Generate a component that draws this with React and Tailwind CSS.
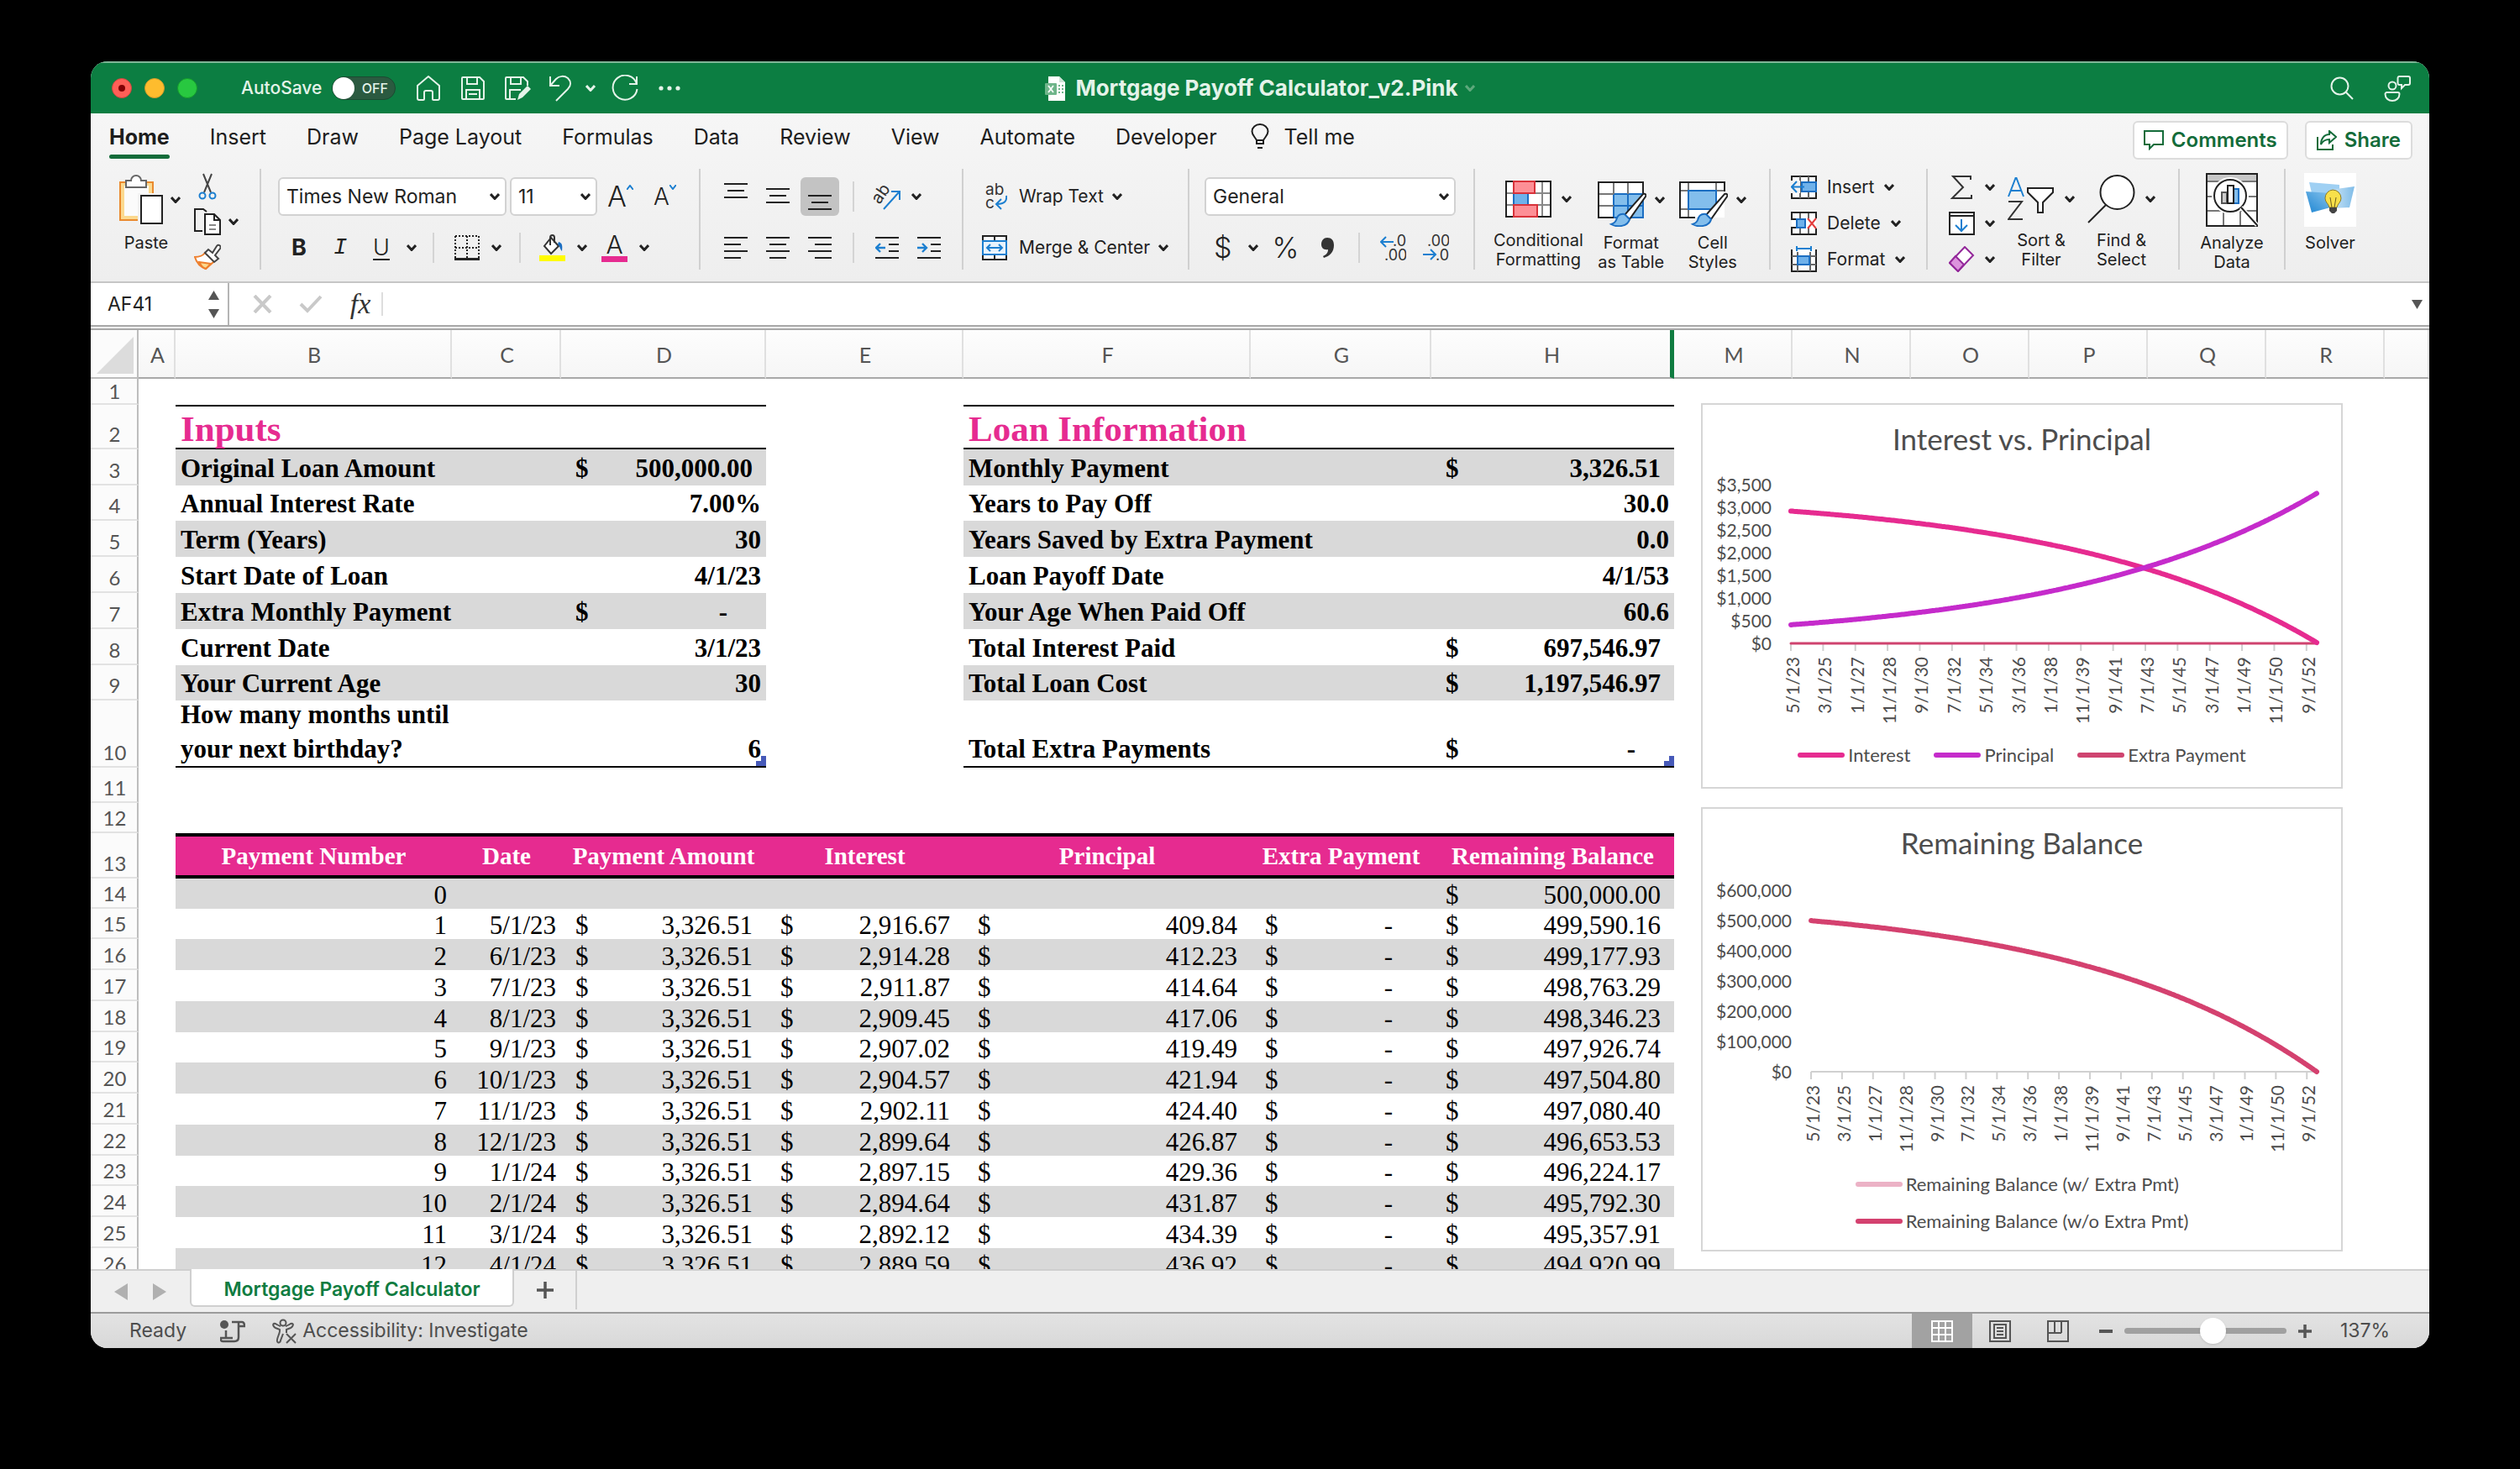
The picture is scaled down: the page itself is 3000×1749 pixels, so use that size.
import { useState } from "react";

const round2 = (n) => Math.round(n * 100) / 100;

const money = (n) =>
  n.toLocaleString("en-US", {
    minimumFractionDigits: 2,
    maximumFractionDigits: 2,
  });

// month 0 is the first payment, 5/1/23
const dateLabel = (month) => {
  const m = 4 + month;
  return `${(m % 12) + 1}/1/${23 + Math.floor(m / 12)}`;
};

const buildSchedule = () => {
  const rows = [];
  let balance = 500000;
  for (let i = 0; i < 360; i++) {
    const interest = round2((balance * 0.07) / 12);
    const principal = Math.min(round2(3326.51 - interest), balance);
    balance = round2(balance - principal);
    rows.push({ number: i + 1, date: dateLabel(i), interest, principal, balance });
  }
  return rows;
};

const schedule = buildSchedule();

const columns = [
  { name: "A", width: "w-11" },
  { name: "B", width: "w-[329px]" },
  { name: "C", width: "w-[130px]" },
  { name: "D", width: "w-[244px]" },
  { name: "E", width: "w-[235px]" },
  { name: "F", width: "w-[342px]" },
  { name: "G", width: "w-[215px]" },
  { name: "H", width: "w-[289px]" },
  { name: "M", width: "w-[141px]" },
  { name: "N", width: "w-[141px]" },
  { name: "O", width: "w-[141px]" },
  { name: "P", width: "w-[141px]" },
  { name: "Q", width: "w-[141px]" },
  { name: "R", width: "w-[141px]" },
  { name: "", width: "" },
];

const summary = [
  { row: 3, h: "h-[43px]", input: "Original Loan Amount", value: "500,000.00", inputMoney: true, info: "Monthly Payment", result: "3,326.51", infoMoney: true },
  { row: 4, h: "h-[42px]", input: "Annual Interest Rate", value: "7.00%", info: "Years to Pay Off", result: "30.0" },
  { row: 5, h: "h-[43px]", input: "Term (Years)", value: "30", info: "Years Saved by Extra Payment", result: "0.0" },
  { row: 6, h: "h-[43px]", input: "Start Date of Loan", value: "4/1/23", info: "Loan Payoff Date", result: "4/1/53" },
  { row: 7, h: "h-[43px]", input: "Extra Monthly Payment", value: "-", inputMoney: true, info: "Your Age When Paid Off", result: "60.6" },
  { row: 8, h: "h-[43px]", input: "Current Date", value: "3/1/23", info: "Total Interest Paid", result: "697,546.97", infoMoney: true },
  { row: 9, h: "h-[42px]", input: "Your Current Age", value: "30", info: "Total Loan Cost", result: "1,197,546.97", infoMoney: true },
];

const Chevron = ({ className = "" }) => (
  <svg className={`h-2 w-3 shrink-0 ${className}`} viewBox="0 0 12 8" fill="none" stroke="currentColor" strokeWidth="3">
    <path d="M1 1l5 5.500L11 1" />
  </svg>
);

/* ---------- title bar ---------- */

const TitleBar = () => {
  const [autoSave, setAutoSave] = useState(false);

  return (
    <header className="grid h-[62px] shrink-0 grid-cols-[1fr_auto_1fr] items-center border-t-2 border-[#7fb697] bg-[#0c7e42] text-[#e4f3e9]">
      <div className="flex items-center pl-[25px]">
        <div className="flex gap-[15px]">
          <button aria-label="Close" className="flex size-6 items-center justify-center rounded-full border border-[#c9483f] bg-[#fe5f57]">
            <span className="size-2 rounded-full bg-[#820005]" />
          </button>
          <button aria-label="Minimize" className="size-6 rounded-full border border-[#cf9a2a] bg-[#febc2e]" />
          <button aria-label="Zoom" className="size-6 rounded-full border border-[#179a2d] bg-[#28c840]" />
        </div>
        <label className="ml-[52px] flex items-center gap-3 text-[21px] leading-7 font-medium">
          AutoSave
          <input type="checkbox" className="sr-only" checked={autoSave} onChange={() => setAutoSave(!autoSave)} />
          <span className="flex h-7 w-[76px] items-center rounded-full border border-[#1b4a31] bg-[#2b5a40] text-base">
            <span className="size-[26px] rounded-full bg-white" />
            <span className="flex-1 text-center">OFF</span>
          </span>
        </label>
        <div className="ml-6 flex items-center">
          <button aria-label="Home">
            <svg className="h-8 w-[30px]" viewBox="0 0 30 32" fill="none" stroke="currentColor" strokeWidth="2">
              <path d="M2 13L15 2l13 11v15a2 2 0 0 1-2 2h-5a1 1 0 0 1-1-1v-8a2 2 0 0 0-2-2h-6a2 2 0 0 0-2 2v8a1 1 0 0 1-1 1H4a2 2 0 0 1-2-2z" strokeLinejoin="round" />
            </svg>
          </button>
          <button aria-label="Save" className="ml-[23px]">
            <svg className="size-[30px]" viewBox="0 0 30 30" fill="none" stroke="currentColor" strokeWidth="2">
              <path d="M3 2h20l5 5v20a1 1 0 0 1-1 1H3a1 1 0 0 1-1-1V3a1 1 0 0 1 1-1z" />
              <path d="M8 2v8h12V2M7 28V17h16v11M10 22h10" />
            </svg>
          </button>
          <button aria-label="Save a copy" className="ml-[22px]">
            <svg className="h-[30px] w-8" viewBox="0 0 32 30" fill="none" stroke="currentColor" strokeWidth="2">
              <path d="M14 28H3a1 1 0 0 1-1-1V3a1 1 0 0 1 1-1h20l5 5v5" />
              <path d="M8 2v8h12V2M7 28V17h13" />
              <path d="M16 29l2-7 10-10 4 4-10 10z" fill="currentColor" stroke="none" />
            </svg>
          </button>
          <button aria-label="Undo" className="ml-[21px]">
            <svg className="h-8 w-7" viewBox="0 0 28 32" fill="none" stroke="currentColor" strokeWidth="2">
              <path d="M2 2v11h11M2 13L9 5c4-4 10-4 14-1 4 4 4 9 0 13L9 31" />
            </svg>
          </button>
          <button aria-label="Undo history" className="ml-4">
            <Chevron />
          </button>
          <button aria-label="Redo" className="ml-[19px]">
            <svg className="h-8 w-8" viewBox="0 0 32 32" fill="none" stroke="currentColor" strokeWidth="2">
              <path d="M30 2v9h-9M30 11A14.5 14.5 0 1 0 30.500 17" />
            </svg>
          </button>
          <button aria-label="More" className="ml-[23px]">
            <svg className="h-2 w-7" viewBox="0 0 28 8" fill="currentColor">
              <circle cx="4" cy="4" r="2.600" />
              <circle cx="14" cy="4" r="2.600" />
              <circle cx="24" cy="4" r="2.600" />
            </svg>
          </button>
        </div>
      </div>
      <h1 className="flex items-center text-[26px] leading-8 font-bold">
        <svg className="mr-3 h-[29px] w-6" viewBox="0 0 24 29">
          <path d="M4 0h13l7 7v22H4z" fill="#fff" />
          <path d="M17 0l7 7h-7z" fill="#cfe3d6" />
          <rect x="0" y="8" width="14" height="14" rx="1" fill="#6fb58a" />
          <path d="M4 11l6 8M10 11l-6 8" stroke="#fff" strokeWidth="1.800" />
          <path d="M16 11h2M20 11h2M16 15h2M20 15h2M16 19h2M20 19h2" stroke="#6fb58a" strokeWidth="2" />
        </svg>
        Mortgage Payoff Calculator_v2.Pink
        <Chevron className="ml-2 text-[#5ea97c]" />
      </h1>
      <div className="flex items-center justify-end gap-9 pr-[22px]">
        <button aria-label="Search">
          <svg className="h-7 w-7" viewBox="0 0 28 28" fill="none" stroke="currentColor" strokeWidth="2">
            <circle cx="11.500" cy="11.500" r="10" />
            <path d="M18.500 18.500L27 27" />
          </svg>
        </button>
        <button aria-label="Presence">
          <svg className="h-8 w-8" viewBox="0 0 32 32" fill="none" stroke="currentColor" strokeWidth="2">
            <circle cx="10" cy="13" r="4.500" />
            <path d="M1.500 23a2 2 0 0 1 2-2h13a2 2 0 0 1 2 2c0 5-4 8-8.500 8s-8.500-3-8.500-8z" />
            <path d="M18 2h11a2 2 0 0 1 2 2v6a2 2 0 0 1-2 2h-4l-4 4v-4h-3a2 2 0 0 1-1.500-2V4A2 2 0 0 1 18 2z" />
          </svg>
        </button>
      </div>
    </header>
  );
};

/* ---------- ribbon ---------- */

const tabs = ["Home", "Insert", "Draw", "Page Layout", "Formulas", "Data", "Review", "View", "Automate", "Developer"];

const RibbonTabs = () => (
  <div className="flex h-[66px] items-start justify-between pr-5 pl-[22px]">
    <nav className="flex gap-12 pt-3 text-[25px] leading-8 text-[#1d1d1d]">
      {tabs.map((tab) => (
        <a key={tab} href={`#${tab}`} className={tab === "Home" ? "font-bold" : ""}>
          {tab}
          {tab === "Home" && <span className="mt-[5px] block h-[5px] rounded-full bg-[#146c3a]" />}
        </a>
      ))}
      <a href="#tell-me" className="-ml-2 flex gap-[18px]">
        <svg className="h-8 w-[22px]" viewBox="0 0 22 32" fill="none" stroke="currentColor" strokeWidth="2">
          <path d="M7 24v-4C5 16 1.500 14 1.500 9.500a9.500 8.500 0 0 1 19 0C20.500 14 17 16 15 20v4z" />
          <path d="M7 20h8M8 29h6" />
        </svg>
        Tell me
      </a>
    </nav>
    <div className="flex gap-5 pt-[9px] text-[24px] font-semibold text-[#146c3a]">
      <button className="flex h-[46px] items-center gap-[9px] rounded-md border-2 border-[#dcdcdc] bg-white px-[11px]">
        <svg className="size-6" viewBox="0 0 24 24" fill="none" stroke="currentColor" strokeWidth="2">
          <path d="M1 1h22v16H12l-5 5v-5H1z" />
        </svg>
        Comments
      </button>
      <button className="flex h-[46px] items-center gap-[9px] rounded-md border-2 border-[#dcdcdc] bg-white px-3">
        <svg className="size-6" viewBox="0 0 24 24" fill="none" stroke="currentColor" strokeWidth="2">
          <path d="M1 8v15h18v-6" />
          <path d="M15 1l8 7-8 7v-4c-5 0-8 2-10 6 0-7 4-12 10-12z" />
        </svg>
        Share
      </button>
    </div>
  </div>
);

const Group = ({ className = "", last, children }) => (
  <div className={`flex h-[120px] shrink-0 ${last ? "" : "border-r-2 border-[#d0d0d0]"} ${className}`}>{children}</div>
);

const Sep = ({ className = "" }) => <span className={`h-9 w-[2px] shrink-0 bg-[#d4d4d4] ${className}`} />;

const BigButton = ({ icon, label, second, chevron = true }) => (
  <button className="flex flex-col items-center pt-[5px] text-[20px] leading-[23px]">
    <span className="mb-2 flex h-16 items-center gap-3">
      {icon}
      {chevron && <Chevron />}
    </span>
    <span>{label}</span>
    {second && <span>{second}</span>}
  </button>
);

const SmallButton = ({ icon, label, aria }) => (
  <button aria-label={aria} className="flex h-[43px] shrink-0 items-center gap-3 text-[21px]">
    {icon}
    {label}
    <Chevron />
  </button>
);

const RibbonSelect = ({ label, options, className }) => (
  <div className={`relative ${className}`}>
    <select
      aria-label={label}
      className="h-[46px] w-full appearance-none rounded-md border-2 border-[#d2d2d2] bg-white pl-2 text-[23px]"
    >
      {options.map((o) => (
        <option key={o}>{o}</option>
      ))}
    </select>
    <Chevron className="pointer-events-none absolute top-[19px] right-2" />
  </div>
);

// every entry is [x, y, length] of one text line
const alignIcons = {
  top: [[0, 8, 28], [4, 16, 20], [0, 24, 28]],
  middle: [[0, 14, 28], [4, 22, 20], [0, 30, 28]],
  bottom: [[0, 22, 28], [4, 30, 20], [0, 38, 28]],
  left: [[0, 11, 28], [0, 19, 20], [0, 27, 28], [0, 35, 20]],
  center: [[0, 11, 28], [4, 19, 20], [0, 27, 28], [4, 35, 20]],
  right: [[0, 11, 28], [8, 19, 20], [0, 27, 28], [8, 35, 20]],
  outdent: [[0, 11, 28], [16, 19, 12], [16, 27, 12], [0, 35, 28]],
  indent: [[0, 11, 28], [16, 19, 12], [16, 27, 12], [0, 35, 28]],
};

const AlignButton = ({ type, selected, children }) => (
  <button
    aria-label={`Align ${type}`}
    className={`flex h-[46px] w-[46px] items-center justify-center rounded-md ${selected ? "bg-[#c3c3c3]" : ""}`}
  >
    <svg className="h-[46px] w-7" viewBox="0 0 28 46" fill="none" stroke="#222" strokeWidth="2">
      {alignIcons[type].map(([x, y, w], i) => (
        <path key={i} d={`M${x} ${y}h${w}`} />
      ))}
      {children}
    </svg>
  </button>
);

const BrushOverlay = () => (
  <g>
    <path d="M54 18c3-1 4 1 3 3L38 48l-6-5z" fill="#fff" stroke="#222" strokeWidth="2" />
    <path d="M32 42c-6-1-9 3-10 7-1 3-3 4-6 5 7 4 20 3 22-6z" fill="#83beec" stroke="#1b6ec2" strokeWidth="2" />
  </g>
);

const Ribbon = () => (
  <section className="h-[202px] shrink-0 border-b-2 border-[#c6c6c6] bg-linear-to-b from-[#f6f6f6] to-[#eeeeee] text-[#222]">
    <RibbonTabs />
    <div className="flex">
      <Group className="w-[203px] pl-[33px]">
        <div className="-mr-1">
          <BigButton
            label={<span className="mr-2">Paste</span>}
            icon={
              <svg className="-mr-[3px] h-[60px] w-[53px]" viewBox="0 0 53 60" fill="none" strokeWidth="2">
                <path d="M2 9h39v45H2z" fill="#fbd98f" stroke="#ea8a2e" />
                <path d="M7 13h29v36H7z" fill="#fbfbfb" />
                <path d="M9 15V7h6a6 6 0 0 1 12 0h6v8z" fill="#fff" stroke="#666" />
                <path d="M26 25h26v34H26z" fill="#fff" stroke="#f3f3f3" strokeWidth="6" />
                <path d="M27 25h25v33H27z" fill="#fff" stroke="#222" />
              </svg>
            }
          />
        </div>
        <div className="ml-5 flex flex-col gap-[10px] pt-[5px]">
          <button aria-label="Cut">
            <svg className="h-8 w-8" viewBox="0 0 32 32" fill="none" strokeWidth="2">
              <path d="M11 1l9 22M21 1l-9 22" stroke="#444" />
              <circle cx="10" cy="27" r="3.500" stroke="#1c7fd0" />
              <circle cx="22" cy="27" r="3.500" stroke="#1c7fd0" />
            </svg>
          </button>
          <button aria-label="Copy" className="flex items-center gap-[9px]">
            <svg className="h-8 w-8" viewBox="0 0 32 32" fill="none" stroke="#222" strokeWidth="2">
              <path d="M10 27H1V1h10l4 3" />
              <path d="M13 7h11l7 7v17H13z" fill="#fff" />
              <path d="M24 7v7h7" />
              <path d="M18 20h8M18 25h8" stroke="#888" />
            </svg>
            <Chevron />
          </button>
          <button aria-label="Format painter">
            <svg className="h-8 w-8" viewBox="0 0 32 32" fill="none" strokeWidth="2">
              <path d="M1 16c5 0 9-1 12-5l11 10-10 9C8 28 3 23 1 16z" fill="#fff" stroke="#ee7f2d" />
              <path d="M6 22l14 2-6 6c-4-1-6-4-8-8z" fill="#fbd98f" stroke="#ee7f2d" />
              <path d="M13 11l4-4 5 4 5-8c2-3 6 0 4 3l-6 8 4 4-5 4z" fill="#fff" stroke="#444" />
            </svg>
          </button>
        </div>
      </Group>

      <Group className="w-[523px] flex-col pt-[10px] pl-5">
        <div className="flex h-[46px] items-center">
          <RibbonSelect label="Font" options={["Times New Roman", "Arial"]} className="w-[272px]" />
          <RibbonSelect label="Font size" options={["11", "12"]} className="ml-1 w-[104px]" />
          <button aria-label="Increase font size" className="ml-3 flex items-start text-[34px] leading-9 font-light">
            A
            <svg className="mt-1 h-[6px] w-2" viewBox="0 0 8 6" fill="none" stroke="#1c7fd0" strokeWidth="2">
              <path d="M0 6l4-5 4 5" />
            </svg>
          </button>
          <button aria-label="Decrease font size" className="ml-6 flex items-start text-[28px] leading-9 font-light">
            A
            <svg className="mt-1 h-[6px] w-2" viewBox="0 0 8 6" fill="none" stroke="#1c7fd0" strokeWidth="2">
              <path d="M0 0l4 5 4-5" />
            </svg>
          </button>
        </div>
        <div className="mt-[15px] flex h-[46px] items-center pl-4 text-[27px]">
          <button aria-label="Bold" className="w-[18px] font-bold">B</button>
          <button aria-label="Italic" className="ml-8 w-[14px] font-['Liberation_Mono',monospace] italic">I</button>
          <button aria-label="Underline" className="ml-[33px] w-5 font-light underline underline-offset-4">U</button>
          <Chevron className="ml-5" />
          <Sep className="ml-[19px]" />
          <button aria-label="Borders" className="ml-6 flex items-center gap-[14px]">
            <svg className="h-[30px] w-[30px]" viewBox="0 0 30 30" fill="none" stroke="#222" strokeWidth="2">
              <path d="M1 1h28M1 15h28M1 1v26M29 1v26M15 1v26" strokeDasharray="2 2" />
              <path d="M0 28.500h30" strokeWidth="3" />
            </svg>
            <Chevron />
          </button>
          <Sep className="ml-[21px]" />
          <button aria-label="Fill color" className="ml-[22px] flex items-center gap-[14px]">
            <svg className="h-8 w-[31px]" viewBox="0 0 31 32" fill="none" strokeWidth="2">
              <path d="M14 4l9 10-9 9-8-9z" fill="#fff" stroke="#333" />
              <path d="M13 13V4c0-4 5-4 5 0v6" stroke="#333" />
              <path d="M23 9c4 1 5 4 4 11-3-3-2-6-5-8z" fill="#1b6ec2" />
              <path d="M0 25h31v7H0z" fill="#fffb00" />
            </svg>
            <Chevron />
          </button>
          <button aria-label="Font color" className="ml-[17px] flex items-center gap-[14px]">
            <span className="flex w-[31px] flex-col items-center text-[30px] leading-6 font-light">
              A
              <span className="mt-[2px] h-[7px] w-full bg-[#e62b90]" />
            </span>
            <Chevron />
          </button>
        </div>
      </Group>

      <Group className="w-[313px] flex-col pt-[10px] pl-[19px]">
        <div className="flex h-[46px] items-center gap-1">
          <AlignButton type="top" />
          <AlignButton type="middle" />
          <AlignButton type="bottom" selected />
          <Sep className="ml-3" />
          <button aria-label="Orientation" className="ml-[18px] flex items-center gap-3">
            <svg className="h-8 w-[34px]" viewBox="0 0 34 32" fill="none">
              <text x="0" y="0" transform="translate(8 26) rotate(-55)" fontSize="20" fill="#333">ab</text>
              <path d="M13 31L31 11M22 10h10v10" stroke="#1c7fd0" strokeWidth="2" />
            </svg>
            <Chevron />
          </button>
        </div>
        <div className="mt-[15px] flex h-[46px] items-center gap-1">
          <AlignButton type="left" />
          <AlignButton type="center" />
          <AlignButton type="right" />
          <Sep className="ml-3" />
          <span className="w-2" />
          <AlignButton type="outdent">
            <path d="M12 23H1M6 18l-5 5 5 5" stroke="#1c7fd0" strokeWidth="2.400" />
          </AlignButton>
          <AlignButton type="indent">
            <path d="M0 23h11M6 18l5 5-5 5" stroke="#1c7fd0" strokeWidth="2.400" />
          </AlignButton>
        </div>
      </Group>

      <Group className="w-[269px] flex-col pt-[10px] pl-[22px] text-[21px]">
        <button className="flex h-[46px] items-center gap-[10px]">
          <svg className="mr-1 h-8 w-[30px]" viewBox="0 0 30 32" fill="none">
            <text x="4" y="14" fontSize="19" fill="#333">ab</text>
            <text x="4" y="30" fontSize="19" fill="#333">c</text>
            <path d="M29 15c1 6-2 10-11 10M23 19l-6 6 6 6" stroke="#1c7fd0" strokeWidth="2" />
          </svg>
          Wrap Text
          <Chevron />
        </button>
        <button className="mt-[15px] flex h-[46px] items-center gap-[10px]">
          <svg className="mr-1 h-[30px] w-[30px]" viewBox="0 0 30 30" fill="none" strokeWidth="2">
            <path d="M1 1h28v28H1zM15 1v6M15 23v6" fill="#fff" stroke="#222" />
            <path d="M1 7h28v16H1z" fill="#e8f3fc" stroke="#1c7fd0" />
            <path d="M6 15h18M10 11l-4 4 4 4M20 11l4 4-4 4" stroke="#1c7fd0" />
          </svg>
          Merge & Center
          <Chevron />
        </button>
      </Group>

      <Group className="w-[340px] flex-col pt-[10px] pl-[18px]">
        <RibbonSelect label="Number format" options={["General", "Currency"]} className="w-[299px]" />
        <div className="mt-[15px] flex h-[46px] items-center pl-[11px]">
          <button aria-label="Currency" className="text-[34px] leading-10 font-light">$</button>
          <Chevron className="ml-5" />
          <button aria-label="Percent" className="ml-4 text-[34px] leading-10 font-light">%</button>
          <button aria-label="Comma style" className="ml-[26px]">
            <svg className="h-6 w-4" viewBox="0 0 16 24" fill="#333">
              <path d="M8 0c5 0 8 3 8 9 0 8-5 13-12 15l-1-2c4-2 6-4 6-8-5 1-8-2-8-6 0-5 3-8 7-8z" />
            </svg>
          </button>
          <Sep className="ml-[29px]" />
          <button aria-label="Increase decimal" className="ml-6">
            <svg className="h-8 w-[31px]" viewBox="0 0 31 32" fill="#333" fontSize="18">
              <text x="15" y="14">.0</text>
              <text x="5" y="31">.00</text>
              <path d="M16 9H1M7 3L1 9l6 6" fill="none" stroke="#1c7fd0" strokeWidth="2" />
            </svg>
          </button>
          <button aria-label="Decrease decimal" className="ml-5">
            <svg className="h-8 w-[31px]" viewBox="0 0 31 32" fill="#333" fontSize="18">
              <text x="5" y="14">.00</text>
              <text x="15" y="31">.0</text>
              <path d="M0 24h15M9 18l6 6-6 6" fill="none" stroke="#1c7fd0" strokeWidth="2" />
            </svg>
          </button>
        </div>
      </Group>

      <Group className="w-[352px] gap-[17px] pl-[22px]">
        <BigButton
          label="Conditional"
          second="Formatting"
          icon={
            <svg className="h-11 w-[55px]" viewBox="0 0 55 44" fill="none" strokeWidth="2">
              <path d="M1 1h53v42H1z" fill="#fff" />
              <path d="M1 15h53M1 29h53M10 1v42M27 1v42M44 1v42" stroke="#888" />
              <path d="M1 1h53v42H1z" stroke="#222" />
              <path d="M10 15h17v14H10z" fill="#6fb1ea" stroke="#1b6ec2" />
              <path d="M10 1h25v14H10zM10 29h28v14H10z" fill="#fd8f96" stroke="#d8323a" />
            </svg>
          }
        />
        <BigButton
          label="Format"
          second="as Table"
          icon={
            <svg className="-mr-[2px] h-16 w-[58px]" viewBox="0 0 58 64" fill="none" strokeWidth="2">
              <path d="M1 11h53v42H1z" fill="#fff" />
              <path d="M19 25h35v28H19z" fill="#83beec" stroke="#1b6ec2" />
              <path d="M1 25h18M1 39h18M19 11v14M36 11v14" stroke="#777" />
              <path d="M36 25v28M19 39h35" stroke="#1b6ec2" />
              <path d="M54 24V11H1v42h18" stroke="#222" />
              <g transform="translate(0 7)">
                <BrushOverlay />
              </g>
            </svg>
          }
        />
        <BigButton
          label="Cell"
          second="Styles"
          icon={
            <svg className="-mr-[2px] h-16 w-[58px]" viewBox="0 0 58 64" fill="none" strokeWidth="2">
              <path d="M1 11h53v42H1z" fill="#fff" />
              <path d="M1 21h53M1 43h10M11 11v42M44 11v10" stroke="#777" />
              <path d="M11 21h33v22H11z" fill="#83beec" stroke="#1b6ec2" />
              <path d="M54 22V11H1v42h18" stroke="#222" />
              <g transform="translate(0 7)">
                <BrushOverlay />
              </g>
            </svg>
          }
        />
      </Group>

      <Group className="w-[187px] flex-col pl-6">
        <SmallButton
          label="Insert"
          icon={
            <svg className="h-7 w-[31px]" viewBox="0 0 31 28" fill="none" strokeWidth="2">
              <path d="M1 1h29v26H1z" fill="#fff" stroke="#222" />
              <path d="M11 1v26M21 1v26" stroke="#666" />
              <path d="M13 8h17v11H13z" fill="#6fb1ea" stroke="#1b6ec2" />
              <path d="M0 6h11v15H0z" fill="#f3f3f3" />
              <path d="M16 13.500H1M7 7l-6 6.500L7 20" stroke="#1c7fd0" />
            </svg>
          }
        />
        <SmallButton
          label="Delete"
          icon={
            <svg className="h-7 w-[31px]" viewBox="0 0 31 28" fill="none" strokeWidth="2">
              <path d="M1 1h29v26H1z" fill="#fff" />
              <path d="M11 1v7M21 1v7M11 19v8M21 19v8" stroke="#666" />
              <path d="M30 8V1H1v8h6M7 19H1v8h29v-7" stroke="#222" />
              <path d="M7 9h10v10H7z" fill="#6fb1ea" stroke="#1b6ec2" />
              <path d="M20 8l10 12M30 8L20 20" stroke="#e33b3b" />
            </svg>
          }
        />
        <SmallButton
          label="Format"
          icon={
            <svg className="h-[31px] w-[31px]" viewBox="0 0 31 31" fill="none" strokeWidth="2">
              <path d="M1 4v26h29V4" fill="#fff" stroke="#222" />
              <path d="M8 7v23M23 7v23M1 12h29M1 22h29" stroke="#666" />
              <path d="M8 12h14v10H8z" fill="#6fb1ea" stroke="#1b6ec2" />
              <path d="M7 3h17M7 0v6M24 0v6" stroke="#1c7fd0" />
            </svg>
          }
        />
      </Group>

      <Group className="w-[300px] gap-[15px] pl-[25px]">
        <div className="flex flex-col">
          <SmallButton
            aria="AutoSum"
            icon={
              <svg className="h-7 w-[31px]" viewBox="0 0 31 28" fill="none" stroke="#333" strokeWidth="2">
                <path d="M26 5V1H5l12 13L4 27h23v-4" />
              </svg>
            }
          />
          <SmallButton
            aria="Fill"
            icon={
              <svg className="h-7 w-[31px]" viewBox="0 0 31 28" fill="none" strokeWidth="2">
                <path d="M1 1h29v26H1zM1 5h29" fill="#fff" stroke="#222" />
                <path d="M15 9v14M8 16l7 7 7-7" stroke="#1c7fd0" />
              </svg>
            }
          />
          <SmallButton
            aria="Clear"
            icon={
              <svg className="h-[31px] w-[31px]" viewBox="0 0 31 31" fill="none" strokeWidth="2" stroke="#93279a">
                <path d="M19 1l10 10-18 19L1 20z" fill="#fff" />
                <path d="M8 12l10 10-7 8L1 20z" fill="#dc94dd" />
              </svg>
            }
          />
        </div>
        <BigButton
          label="Sort &"
          second="Filter"
          icon={
            <svg className="h-[54px] w-[56px]" viewBox="0 0 56 54" fill="none" strokeWidth="2">
              <path d="M1 24L9.500 2h1L19 24M4 17h12" stroke="#1c7fd0" />
              <path d="M1 30h16L1 51h17" stroke="#333" />
              <path d="M24 14h30v5L42 31v12h-6V31L24 19z" fill="#fff" stroke="#222" />
            </svg>
          }
        />
        <BigButton
          label="Find &"
          second="Select"
          icon={
            <svg className="h-[58px] w-[57px]" viewBox="0 0 57 58" fill="none" stroke="#222" strokeWidth="2">
              <circle cx="35.500" cy="21" r="20" fill="#fff" />
              <path d="M22 36L1 57" />
            </svg>
          }
        />
      </Group>

      <Group className="w-[126px] justify-center">
        <BigButton
          label="Analyze"
          second="Data"
          chevron={false}
          icon={
            <svg className="h-16 w-[62px]" viewBox="0 0 62 64" fill="none" strokeWidth="2">
              <path d="M1 1h60v62H1z" fill="#fff" />
              <path d="M1 1h60v9H1z" fill="#c8c8c8" />
              <path d="M1 10h60M1 28h60M1 45h60M21 45v18M41 45v18" stroke="#777" />
              <path d="M1 1h60v62H1z" stroke="#222" />
              <circle cx="29" cy="27" r="19" fill="#fff" stroke="#fff" strokeWidth="6" />
              <circle cx="29" cy="27" r="19" fill="#fff" stroke="#222" />
              <path d="M19 23h6v13h-6z" fill="#ccc" stroke="#555" />
              <path d="M33 19h6v17h-6z" fill="#83beec" stroke="#1b6ec2" />
              <path d="M26 15h7v21h-7z" fill="#fff" stroke="#222" />
              <path d="M42 41l19 21" stroke="#fff" strokeWidth="5" />
              <path d="M42 41l19 21" stroke="#222" />
            </svg>
          }
        />
      </Group>

      <Group last className="pl-[22px]">
        <BigButton
          label="Solver"
          chevron={false}
          icon={
            <svg className="h-16 w-[62px]" viewBox="0 0 62 64" fill="none">
              <defs>
                <linearGradient id="left-screen" x1="0" y1="1" x2="1" y2="0">
                  <stop offset="0" stopColor="#1f86d2" />
                  <stop offset="1" stopColor="#8cc6ee" />
                </linearGradient>
                <linearGradient id="right-screen" x1="0" y1="0" x2="1" y2="0">
                  <stop offset="0" stopColor="#d3e9f8" />
                  <stop offset="1" stopColor="#7fbce8" />
                </linearGradient>
              </defs>
              <path d="M0 0h62v64H0z" fill="#fff" />
              <path d="M6 11l36 3v12L10 28z" fill="#9fd0f3" />
              <path d="M30 20l30-4-6 25-22 1z" fill="url(#right-screen)" />
              <path d="M2 22l30 2 3 16-26 7z" fill="url(#left-screen)" />
              <path d="M34 20a10 10 0 0 1 10 10c0 5-4 6-5 11h-9c-1-5-5-6-5-11a10 10 0 0 1 9-10z" fill="#f8e04a" stroke="#8a7a2a" />
              <path d="M31 29l2 12M38 29l-2 12" stroke="#6d5c1c" />
              <path d="M30 41h9v4l-3 3h-3l-3-3z" fill="#444" />
            </svg>
          }
        />
      </Group>
    </div>
  </section>
);

/* ---------- formula bar ---------- */

const FormulaBar = () => (
  <div className="flex h-[50px] shrink-0 items-center bg-white">
    <div className="flex h-full w-[165px] items-center justify-between border-r-2 border-[#b5b5b5] pr-[10px] pl-5">
      <input aria-label="Name box" defaultValue="AF41" className="w-28 text-[23px] text-[#222]" />
      <div className="flex flex-col gap-[11px]">
        <button aria-label="Previous cell">
          <svg className="h-[11px] w-[13px]" viewBox="0 0 13 11" fill="#555">
            <path d="M6.500 0L13 11H0z" />
          </svg>
        </button>
        <button aria-label="Next cell">
          <svg className="h-[11px] w-[13px]" viewBox="0 0 13 11" fill="#555">
            <path d="M6.500 11L13 0H0z" />
          </svg>
        </button>
      </div>
    </div>
    <button aria-label="Cancel" className="ml-7">
      <svg className="h-[22px] w-[23px]" viewBox="0 0 23 22" stroke="#c9c9c9" strokeWidth="4">
        <path d="M2 1l19 20M21 1L2 21" />
      </svg>
    </button>
    <button aria-label="Enter" className="ml-8">
      <svg className="h-[22px] w-7" viewBox="0 0 28 22" fill="none" stroke="#c9c9c9" strokeWidth="4">
        <path d="M2 11l8 8L26 2" />
      </svg>
    </button>
    <button aria-label="Insert function" className="ml-7 w-[34px] font-['Liberation_Serif',serif] text-[34px] leading-9 text-[#333] italic">
      fx
    </button>
    <span className="ml-2 h-7 w-[2px] bg-[#dedede]" />
    <input aria-label="Formula" className="h-full flex-1 px-3 text-[23px]" />
    <button aria-label="Expand formula bar" className="pr-2">
      <svg className="h-[11px] w-[13px]" viewBox="0 0 13 11" fill="#555">
        <path d="M6.500 11L13 0H0z" />
      </svg>
    </button>
  </div>
);

/* ---------- grid ---------- */

const RowNumber = ({ n, leading = "leading-[33px]" }) => (
  <th
    scope="row"
    className={`border-r-2 border-b-2 border-r-[#bdbdbd] border-b-[#e2e2e2] bg-[#fbfbfb] pl-[2px] text-center align-bottom font-['Lato',sans-serif] text-[24px] font-normal text-[#555] ${leading}`}
  >
    {n}
  </th>
);

const Money = ({ value }) => (
  <div className={`flex justify-between pl-[17px] ${value === "-" ? "pr-[46px]" : "pr-4"}`}>
    <span>$</span>
    <span>{value}</span>
  </div>
);

const Corner = () => (
  <svg className="absolute right-0 bottom-0 h-3 w-3" viewBox="0 0 12 12" fill="#4659b8">
    <path d="M6 0h6v12H0V6h6z" />
  </svg>
);

const SummaryRow = ({ item }) => {
  const fill = item.row % 2 ? "bg-[#d9d9d9]" : "";
  return (
    <tr className={item.h}>
      <RowNumber n={item.row} />
      <td />
      <td className={`pl-[6px] ${fill}`}>{item.input}</td>
      <td className={fill} />
      {item.inputMoney ? (
        <td className={fill}>
          <Money value={item.value} />
        </td>
      ) : (
        <td className={`pr-[6px] text-right ${fill}`}>{item.value}</td>
      )}
      <td />
      <td colSpan="2" className={`pl-[6px] ${fill}`}>
        {item.info}
      </td>
      {item.infoMoney ? (
        <td className={fill}>
          <Money value={item.result} />
        </td>
      ) : (
        <td className={`pr-[6px] text-right ${fill}`}>{item.result}</td>
      )}
    </tr>
  );
};

const headers = ["Payment Number", "Date", "Payment Amount", "Interest", "Principal", "Extra Payment", "Remaining Balance"];

const Grid = () => (
  <table className="w-full table-fixed border-separate border-spacing-0 font-['Liberation_Serif',serif] text-[31px] text-black">
    <colgroup>
      <col className="w-[57px]" />
      {columns.map((c, i) => (
        <col key={i} className={c.width} />
      ))}
    </colgroup>
    <thead>
      <tr className="h-[58px] font-['Lato',sans-serif] text-[25px] text-[#555]">
        <td className="border-r-2 border-b-2 border-[#bdbdbd] bg-[#fbfbfb] align-bottom">
          <svg className="mr-1 mb-1 ml-auto size-11" viewBox="0 0 44 44" fill="#dcdcdc">
            <path d="M44 0v44H0z" />
          </svg>
        </td>
        {columns.map((c, i) => (
          <th
            key={i}
            scope="col"
            className={`border-b-2 border-b-[#a9a9a9] bg-linear-to-b from-[#fdfdfd] to-[#f6f6f6] pt-1 pl-[3px] font-normal ${
              c.name === "H" ? "border-r-[5px] border-r-[#107c41]" : "border-r-2 border-r-[#e0e0e0]"
            }`}
          >
            {c.name}
          </th>
        ))}
      </tr>
    </thead>
    <tbody className="leading-10 font-bold [&_td]:align-bottom">
      <tr className="h-[31px]">
        <RowNumber n={1} leading="leading-[29px]" />
      </tr>
      <tr className="h-[53px] text-[43px] leading-[44px] text-[#e62b90]">
        <RowNumber n={2} />
        <td />
        <td colSpan="3" className="border-y-2 border-black pl-[6px]">
          Inputs
        </td>
        <td />
        <td colSpan="3" className="border-y-2 border-black pl-[6px]">
          Loan Information
        </td>
      </tr>
      {summary.map((item) => (
        <SummaryRow key={item.row} item={item} />
      ))}
      <tr className="h-20">
        <RowNumber n={10} />
        <td />
        <td className="border-b-2 border-black pl-[6px]">
          <div className="flex h-[78px] items-end leading-[41px]">How many months until your next birthday?</div>
        </td>
        <td className="border-b-2 border-black" />
        <td className="relative border-b-2 border-black pr-[6px] text-right">
          6
          <Corner />
        </td>
        <td />
        <td colSpan="2" className="border-b-2 border-black pl-[6px]">
          Total Extra Payments
        </td>
        <td className="relative border-b-2 border-black">
          <Money value="-" />
          <Corner />
        </td>
      </tr>
      <tr className="h-[42px]">
        <RowNumber n={11} />
      </tr>
      <tr className="h-9">
        <RowNumber n={12} />
      </tr>
      <tr className="h-[54px]">
        <RowNumber n={13} />
        <td />
        {headers.map((h) => (
          <th
            key={h}
            scope="col"
            className="border-y-4 border-black bg-[#e62b90] text-center text-[29px] leading-8 font-bold whitespace-nowrap text-white"
          >
            {h}
          </th>
        ))}
      </tr>
    </tbody>
    <tbody className="leading-8 [&_td]:align-bottom">
      <tr className="h-9">
        <RowNumber n={14} />
        <td />
        <td className="bg-[#d9d9d9] pr-[6px] text-right">0</td>
        <td colSpan="5" className="bg-[#d9d9d9]" />
        <td className="bg-[#d9d9d9]">
          <Money value="500,000.00" />
        </td>
      </tr>
      {schedule.slice(0, 12).map((p) => {
        const fill = p.number % 2 ? "" : "bg-[#d9d9d9]";
        return (
          <tr key={p.number} className="h-[37px] nth-[4n+2]:h-9">
            <RowNumber n={p.number + 14} />
            <td />
            <td className={`pr-[6px] text-right ${fill}`}>{p.number}</td>
            <td className={`pr-[6px] text-right ${fill}`}>{p.date}</td>
            <td className={fill}>
              <Money value="3,326.51" />
            </td>
            <td className={fill}>
              <Money value={money(p.interest)} />
            </td>
            <td className={fill}>
              <Money value={money(p.principal)} />
            </td>
            <td className={fill}>
              <Money value="-" />
            </td>
            <td className={fill}>
              <Money value={money(p.balance)} />
            </td>
          </tr>
        );
      })}
    </tbody>
  </table>
);

/* ---------- charts ---------- */

const toPath = (values, left, width, bottom, perUnit) =>
  values
    .map((v, i) => `${i ? "L" : "M"}${(left + (i * width) / (values.length - 1)).toFixed(1)} ${(bottom - v * perUnit).toFixed(1)}`)
    .join("");

const Chart = ({ title, height, left, bottom, gap, step, count, lines, legend, legendClass }) => {
  const width = 731 - left;
  const ticks = Array.from({ length: 17 }, (_, i) => i * 22);
  return (
    <figure className="flex w-[764px] flex-col items-center border-2 border-[#d6d6d6] bg-white font-['Lato',sans-serif] text-[#4d4d4d]">
      <figcaption className="pt-[18px] pb-[2px] text-[35px] leading-[44px]">{title}</figcaption>
      <svg className="w-full" viewBox={`0 0 760 ${height}`} fontSize="21" fill="#4d4d4d">
        {Array.from({ length: count }, (_, i) => (
          <text key={i} x={left - 23} y={bottom - i * gap + 8} textAnchor="end">
            ${(i * step).toLocaleString("en-US")}
          </text>
        ))}
        <path d={`M${left} ${bottom}h${width}`} stroke="#d0d0d0" strokeWidth="2" />
        {ticks.map((t) => {
          const x = left + (t * width) / 359;
          return (
            <g key={t}>
              <path d={`M${x} ${bottom}v9`} stroke="#d0d0d0" strokeWidth="2" />
              <text transform={`translate(${x + 10} ${bottom + 16}) rotate(-90)`} textAnchor="end">
                {dateLabel(t)}
              </text>
            </g>
          );
        })}
        {lines.map((l) => (
          <path
            key={l.color}
            d={toPath(l.values, left, width, bottom, gap / step)}
            fill="none"
            stroke={l.color}
            strokeWidth={l.thin ? 3 : 6}
            strokeLinejoin="round"
            strokeLinecap="round"
          />
        ))}
      </svg>
      <ul className={`flex text-[22px] leading-6 ${legendClass}`}>
        {legend.map((l) => (
          <li key={l.name} className="flex items-center gap-1">
            <span className="h-[6px] w-14 rounded-full" style={{ background: l.color }} />
            {l.name}
          </li>
        ))}
      </ul>
    </figure>
  );
};

const Charts = () => (
  <div className="absolute top-[87px] left-[1917px] flex flex-col gap-[22px]">
    <Chart
      title="Interest vs. Principal"
      height={341}
      left={105}
      bottom={220}
      gap={27}
      step={500}
      count={8}
      lines={[
        { color: "#cf436f", values: schedule.map(() => 0), thin: true },
        { color: "#e62b90", values: schedule.map((p) => p.interest) },
        { color: "#c52bcb", values: schedule.map((p) => p.principal) },
      ]}
      legend={[
        { name: "Interest", color: "#e62b90" },
        { name: "Principal", color: "#c52bcb" },
        { name: "Extra Payment", color: "#cf436f" },
      ]}
      legendClass="gap-7 pb-[26px]"
    />
    <Chart
      title="Remaining Balance"
      height={371}
      left={129}
      bottom={249}
      gap={36}
      step={100000}
      count={7}
      lines={[{ color: "#d4416f", values: schedule.map((p) => p.balance) }]}
      legend={[
        { name: "Remaining Balance (w/ Extra Pmt)", color: "#ecb2c6" },
        { name: "Remaining Balance (w/o Extra Pmt)", color: "#d4416f" },
      ]}
      legendClass="flex-col gap-5 pb-[22px]"
    />
  </div>
);

/* ---------- bottom bars ---------- */

const SheetTabs = () => (
  <div className="flex h-[51px] shrink-0 items-start border-t-2 border-[#cfcfcf] bg-[#efefef]">
    <div className="flex gap-[30px] pt-[15px] pl-7">
      <button aria-label="Previous sheet">
        <svg className="h-5 w-4" viewBox="0 0 16 20" fill="#b0b0b0">
          <path d="M16 0v20L0 10z" />
        </svg>
      </button>
      <button aria-label="Next sheet">
        <svg className="h-5 w-4" viewBox="0 0 16 20" fill="#b0b0b0">
          <path d="M0 0v20l16-10z" />
        </svg>
      </button>
    </div>
    <button className="-mt-[2px] ml-7 h-[45px] w-[386px] rounded-b-md border-2 border-t-0 border-[#cfcfcf] bg-white pt-[6px] text-[23px] font-semibold text-[#107c41]">
      Mortgage Payoff Calculator
    </button>
    <button aria-label="Add sheet" className="flex h-[46px] w-[75px] items-center justify-center border-r-2 border-[#cfcfcf]">
      <svg className="size-5" viewBox="0 0 20 20" stroke="#555" strokeWidth="3.500">
        <path d="M10 0v20M0 10h20" />
      </svg>
    </button>
  </div>
);

const StatusBar = () => {
  const [zoom, setZoom] = useState(137);

  return (
    <footer className="flex h-[43px] shrink-0 items-center justify-between border-t-2 border-[#9c9c9c] bg-linear-to-b from-[#e3e3e3] to-[#d8d8d8] text-[23px] text-[#4d4d4d]">
      <div className="flex items-center pl-[46px]">
        <span>Ready</span>
        <svg className="ml-10 h-7 w-[30px]" viewBox="0 0 30 28" fill="none" stroke="#555" strokeWidth="2.500">
          <circle cx="5" cy="6" r="5" fill="#555" stroke="none" />
          <path d="M14 3h12c3 0 3 5 3 5h-6M22 3v18c0 5-4 5-5 5H3c-3 0-2-4-2-4h14M7 13v9" />
        </svg>
        <button className="ml-8 flex items-center gap-[6px]">
          <svg className="h-[30px] w-[30px]" viewBox="0 0 30 30" fill="none" stroke="#555" strokeWidth="2">
            <circle cx="13" cy="5" r="3.500" />
            <path d="M10 9C6 8 4 5 2 6s0 4 2 5l5 2c1 4-4 10-3 14 1 3 4 1 4-1l3-8M16 9c4-1 6-4 8-3s0 4-2 5l-5 2v4" />
            <path d="M17 18l11 11M28 18L17 29" />
          </svg>
          Accessibility: Investigate
        </button>
      </div>
      <div className="flex h-full items-center">
        <button aria-label="Normal view" className="flex h-full w-[72px] items-center justify-center bg-[#a2a2a2]">
          <svg className="size-[26px]" viewBox="0 0 26 26" fill="none" stroke="#fff" strokeWidth="2">
            <path d="M1 1h24v24H1zM9 1v24M17 1v24M1 9h24M1 17h24" />
          </svg>
        </button>
        <button aria-label="Page layout view" className="ml-5">
          <svg className="size-[26px]" viewBox="0 0 26 26" fill="none" stroke="#555" strokeWidth="2">
            <path d="M1 1h24v24H1zM6 5h14v16H6zM9 9h8M9 13h8M9 17h8" />
          </svg>
        </button>
        <button aria-label="Page break view" className="ml-[43px]">
          <svg className="size-[26px]" viewBox="0 0 26 26" fill="none" stroke="#555" strokeWidth="2">
            <path d="M1 1h24v24H1zM9 1v14M17 1v14M1 15h16" />
          </svg>
        </button>
        <button aria-label="Zoom out" className="ml-9">
          <span className="block h-1 w-4 bg-[#555]" />
        </button>
        <input
          type="range"
          aria-label="Zoom"
          min="20"
          max="230"
          value={zoom}
          onChange={(e) => setZoom(Number(e.target.value))}
          className="ml-[14px] h-[7px] w-[193px] appearance-none rounded-full bg-[#a0a0a0] [&::-webkit-slider-thumb]:size-[31px] [&::-webkit-slider-thumb]:appearance-none [&::-webkit-slider-thumb]:rounded-full [&::-webkit-slider-thumb]:bg-white [&::-webkit-slider-thumb]:shadow"
        />
        <button aria-label="Zoom in" className="ml-[14px]">
          <svg className="size-4" viewBox="0 0 16 16" stroke="#555" strokeWidth="3.500">
            <path d="M8 0v16M0 8h16" />
          </svg>
        </button>
        <span className="w-[140px] pl-[34px]">{zoom}%</span>
      </div>
    </footer>
  );
};

export default function App() {
  return (
    <div className="flex h-screen flex-col bg-black px-[108px] pt-[73px] pb-36 font-['Inter',sans-serif]">
      <main className="flex min-h-0 flex-1 flex-col overflow-hidden rounded-[20px] bg-white">
        <TitleBar />
        <Ribbon />
        <FormulaBar />
        <div className="h-[6px] shrink-0 border-y-2 border-[#a8a8a8] bg-[#eeeeee]" />
        <div className="relative min-h-0 flex-1 overflow-hidden">
          <Grid />
          <Charts />
        </div>
        <SheetTabs />
        <StatusBar />
      </main>
    </div>
  );
}
